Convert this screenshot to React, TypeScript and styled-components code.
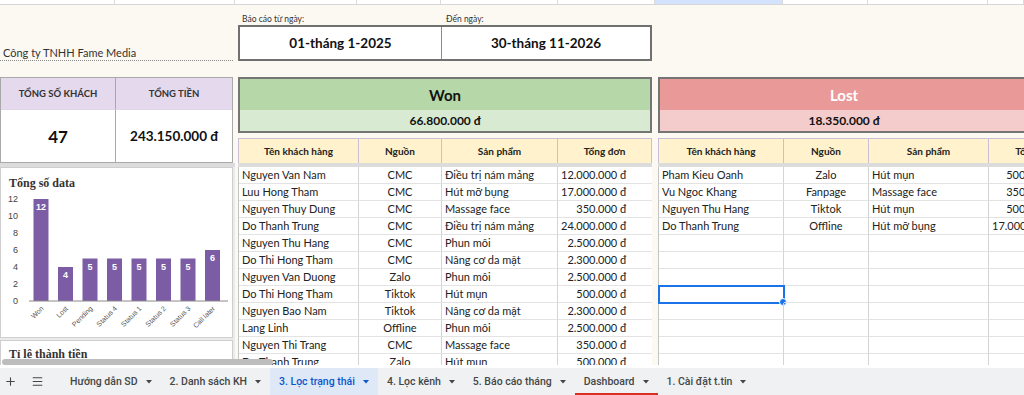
import React from "react";
import styled, { createGlobalStyle } from "styled-components";
import { Plus, Menu } from "lucide-react";

const GlobalStyle = createGlobalStyle`
  html, body {
    margin: 0;
    padding: 0;
  }
  body {
    width: 1024px;
    height: 395px;
    overflow: hidden;
    background: #fcf9f2;
    font-family: Lato, "Noto Sans", sans-serif;
    color: #222;
  }
`;

const palette = {
  cream: "#fcf9f2",
  lavender: "#e5d9ed",
  wonTop: "#b6d7a8",
  wonBottom: "#d9ead3",
  lostTop: "#ea9999",
  lostBottom: "#f4cccc",
  headYellow: "#fff2cc",
  frozen: "#dcdcdc",
  bar: "#7c5ca5",
};

interface Row {
  name: string;
  source: string;
  product: string;
  total: string;
}

const wonRows: Row[] = [
  { name: "Nguyen Van Nam", source: "CMC", product: "Điều trị nám mảng", total: "12.000.000 đ" },
  { name: "Luu Hong Tham", source: "CMC", product: "Hút mỡ bụng", total: "17.000.000 đ" },
  { name: "Nguyen Thuy Dung", source: "CMC", product: "Massage face", total: "350.000 đ" },
  { name: "Do Thanh Trung", source: "CMC", product: "Điều trị nám mảng", total: "24.000.000 đ" },
  { name: "Nguyen Thu Hang", source: "CMC", product: "Phun môi", total: "2.500.000 đ" },
  { name: "Do Thi Hong Tham", source: "CMC", product: "Nâng cơ da mặt", total: "2.300.000 đ" },
  { name: "Nguyen Van Duong", source: "Zalo", product: "Phun môi", total: "2.500.000 đ" },
  { name: "Do Thi Hong Tham", source: "Tiktok", product: "Hút mụn", total: "500.000 đ" },
  { name: "Nguyen Bao Nam", source: "Tiktok", product: "Nâng cơ da mặt", total: "2.300.000 đ" },
  { name: "Lang Linh", source: "Offline", product: "Phun môi", total: "2.500.000 đ" },
  { name: "Nguyen Thi Trang", source: "CMC", product: "Massage face", total: "350.000 đ" },
  { name: "Do Thanh Trung", source: "Zalo", product: "Hút mụn", total: "500.000 đ" },
];

const lostRows: Row[] = [
  { name: "Pham Kieu Oanh", source: "Zalo", product: "Hút mụn", total: "500.000 đ" },
  { name: "Vu Ngoc Khang", source: "Fanpage", product: "Massage face", total: "350.000 đ" },
  { name: "Nguyen Thu Hang", source: "Tiktok", product: "Hút mụn", total: "500.000 đ" },
  { name: "Do Thanh Trung", source: "Offline", product: "Hút mỡ bụng", total: "17.000.000 đ" },
  ...Array.from({ length: 8 }, () => ({ name: "", source: "", product: "", total: "" })),
];

const chartData = [
  { label: "Won", value: 12 },
  { label: "Lost", value: 4 },
  { label: "Pending", value: 5 },
  { label: "Status 4", value: 5 },
  { label: "Status 1", value: 5 },
  { label: "Status 2", value: 5 },
  { label: "Status 3", value: 5 },
  { label: "Call later", value: 6 },
];

const topCells = [115, 120, 122, 84, 117, 97, 128, 85, 120, 36];

const tabs = [
  { label: "Hướng dẫn SD" },
  { label: "2. Danh sách KH" },
  { label: "3. Lọc trạng thái", active: true },
  { label: "4. Lọc kênh" },
  { label: "5. Báo cáo tháng" },
  { label: "Dashboard", current: true },
  { label: "1. Cài đặt t.tin" },
];

/* ---------- layout ---------- */

const Page = styled.div`
  width: 1024px;
  height: 395px;
  display: flex;
  flex-direction: column;
  overflow: hidden;
`;

const TopStrip = styled.div`
  display: flex;
  height: 4px;
  background: #fff;
  border-bottom: 1px solid #d6d6d6;
  flex-shrink: 0;
`;

const TopCell = styled.div<{ $w: number; $selected?: boolean }>`
  width: ${(p) => p.$w}px;
  flex-shrink: 0;
  box-sizing: border-box;
  border-right: 1px solid #dadada;
  background: ${(p) => (p.$selected ? "#d3e3fd" : "#fff")};
`;

const Main = styled.div`
  position: relative;
  height: 360px;
  display: flex;
  overflow: hidden;
  flex-shrink: 0;
`;

const Column = styled.div<{ $width: number; $offset?: number }>`
  width: ${(p) => p.$width}px;
  margin-left: ${(p) => p.$offset || 0}px;
  flex-shrink: 0;
  display: flex;
  flex-direction: column;
  overflow: hidden;
  & > * {
    flex-shrink: 0;
  }
`;

/* ---------- left column ---------- */

const CompanyArea = styled.div`
  height: 72px;
  padding-top: 40px;
  box-sizing: border-box;
`;

const CompanyName = styled.div`
  font-size: 11px;
  line-height: 15px;
  padding-left: 3px;
  margin-right: 2px;
  color: #333;
  border-bottom: 1px dotted #8a8a8a;
`;

const StatsPanel = styled.div`
  height: 86px;
  width: 233px;
  box-sizing: border-box;
  border: 1px solid #a9a9a9;
  display: grid;
  grid-template-columns: 114px 1fr;
  grid-template-rows: 32px 1fr;
  background: #fff;
`;

const StatLabel = styled.div`
  background: ${palette.lavender};
  display: flex;
  align-items: center;
  justify-content: center;
  font-size: 9.5px;
  font-weight: 700;
  color: #333;
  border-bottom: 1px solid #e0d4e8;
  & + & {
    border-left: 1px solid #a9a9a9;
  }
`;

const StatValue = styled.div<{ $size: number; $divider?: boolean }>`
  display: flex;
  align-items: center;
  justify-content: center;
  font-size: ${(p) => p.$size}px;
  font-weight: 700;
  color: #111;
  border-left: ${(p) => (p.$divider ? "1px solid #a9a9a9" : "none")};
`;

const FrozenBar = styled.div`
  height: 4px;
  background: ${palette.frozen};
  flex-shrink: 0;
`;

const ChartStack = styled.div`
  flex: 1;
  background: #ebebeb;
  padding-right: 2px;
  display: flex;
  flex-direction: column;
  gap: 2px;
`;

const ChartCard = styled.div<{ $height?: number }>`
  height: ${(p) => (p.$height ? `${p.$height}px` : "auto")};
  flex: ${(p) => (p.$height ? "none" : "1")};
  background: #fff;
  border: 1px solid #cfcfcf;
  box-sizing: border-box;
`;

const ChartTitle = styled.div<{ $pad: number }>`
  font-family: "Liberation Serif", "DejaVu Serif", serif;
  font-weight: 700;
  font-size: 12px;
  color: #333;
  height: 24px;
  box-sizing: border-box;
  padding: ${(p) => p.$pad}px 0 0 ${(p) => (p.$pad > 5 ? 8 : 3)}px;
`;

const ChartSvg = styled.svg`
  display: block;
`;

/* ---------- date + status blocks ---------- */

const DateArea = styled.div`
  height: 72px;
  padding-top: 9px;
  box-sizing: border-box;
`;

const DateLabels = styled.div`
  display: grid;
  grid-template-columns: 203px 1fr;
  font-size: 8.5px;
  line-height: 11px;
  color: #333;
  padding-left: 4px;
  & > span + span {
    padding-left: 1px;
  }
`;

const DateBox = styled.div`
  height: 36px;
  box-sizing: border-box;
  border: 2px solid #707070;
  background: #fff;
  display: grid;
  grid-template-columns: 201px 1fr;
`;

const DateValue = styled.div`
  display: flex;
  align-items: center;
  justify-content: center;
  font-size: 13.5px;
  font-weight: 700;
  color: #111;
  & + & {
    border-left: 1px solid #8a8a8a;
  }
`;

const EmptyArea = styled.div`
  height: 72px;
`;

const StatusBlock = styled.div`
  height: 56px;
  box-sizing: border-box;
  border: 2px solid #757575;
  display: grid;
  grid-template-rows: 31px 1fr;
`;

const StatusTitle = styled.div<{ $bg: string; $light?: boolean }>`
  background: ${(p) => p.$bg};
  color: ${(p) => (p.$light ? "#fff" : "#111")};
  display: flex;
  align-items: center;
  justify-content: center;
  font-size: 15px;
  font-weight: 700;
`;

const StatusAmount = styled.div<{ $bg: string }>`
  background: ${(p) => p.$bg};
  display: flex;
  align-items: center;
  justify-content: center;
  font-size: 12px;
  font-weight: 700;
  color: #111;
`;

/* ---------- tables ---------- */

const TableGrid = styled.div<{ $cols: string }>`
  display: grid;
  grid-template-columns: ${(p) => p.$cols};
`;

const HeadRow = styled(TableGrid)`
  margin-top: 5px;
  height: 25px;
  background: ${palette.headYellow};
  border-top: 1px solid #cbbfd4;
  border-left: 1px solid #cbbfd4;
  box-sizing: border-box;
`;

const HeadCell = styled.div`
  display: flex;
  align-items: center;
  justify-content: center;
  font-size: 10px;
  font-weight: 700;
  color: #222;
  border-right: 1px solid #cbbfd4;
  white-space: nowrap;
`;

const Body = styled(TableGrid)`
  background: #fff;
  border-left: 1px solid #c4c4c4;
  grid-auto-rows: 17px;
`;

const Cell = styled.div<{ $align?: "left" | "center" | "right"; $selected?: boolean }>`
  position: relative;
  box-sizing: border-box;
  font-size: 11px;
  line-height: 16px;
  color: #222;
  white-space: nowrap;
  overflow: visible;
  text-align: ${(p) => p.$align || "left"};
  padding: ${(p) => (p.$align === "right" ? "0 27px 0 3px" : "0 3px")};
  border-right: 1px solid #d4d4d4;
  border-bottom: 1px solid #e3e3e3;
  outline: ${(p) => (p.$selected ? "2px solid #1a73e8" : "none")};
  outline-offset: -1px;
  &::after {
    content: "";
    display: ${(p) => (p.$selected ? "block" : "none")};
    position: absolute;
    right: -4px;
    bottom: -4px;
    width: 6px;
    height: 6px;
    border-radius: 50%;
    background: #1a73e8;
    border: 1px solid #fff;
  }
`;

const ScrollThumb = styled.div`
  position: absolute;
  z-index: 2;
  left: 2px;
  bottom: 0;
  width: 271px;
  height: 6px;
  border-radius: 3px;
  background: #bdbdbd;
`;

const ScrollGap = styled.div`
  height: 3px;
  background: #fff;
  flex-shrink: 0;
`;

/* ---------- sheet tabs ---------- */

const TabBar = styled.div`
  height: 27px;
  background: #eff1f3;
  display: flex;
  align-items: stretch;
  font-family: Roboto, "Noto Sans", sans-serif;
  flex-shrink: 0;
`;

const IconButton = styled.div<{ $offset?: number }>`
  width: 20px;
  margin-left: ${(p) => p.$offset || 0}px;
  display: flex;
  align-items: center;
  justify-content: center;
  color: #444746;
`;

const Tabs = styled.div`
  display: flex;
  margin-left: 14px;
`;

const Tab = styled.div<{ $active?: boolean; $current?: boolean }>`
  display: flex;
  align-items: center;
  gap: 8px;
  padding: 0 9px;
  font-size: 10.5px;
  font-weight: 500;
  white-space: nowrap;
  color: ${(p) => (p.$active ? "#0b57d0" : "#444746")};
  background: ${(p) => (p.$active ? "#dfe8f6" : "transparent")};
  box-shadow: ${(p) => (p.$current ? "inset 0 -2px 0 #d93025" : "none")};
`;

const Caret: React.FC = () => (
  <svg width="6" height="4" viewBox="0 0 6 4">
    <path d="M0 0 L6 0 L3 3.5 Z" fill="currentColor" />
  </svg>
);

/* ---------- pieces ---------- */

const DataChart: React.FC = () => {
  const axisY = 109;
  const unit = 8.5;
  const centers = [40, 64.5, 89, 113.5, 138, 162.5, 187, 211.5];
  return (
    <ChartSvg width="230" height="146" viewBox="0 0 230 146">
      {[0, 2, 4, 6, 8, 10, 12].map((v) => (
        <text
          key={v}
          x={17}
          y={axisY - v * unit + 3}
          textAnchor="end"
          fontSize="9"
          fontFamily="Liberation Sans, Arial, sans-serif"
          fill="#444"
        >
          {v}
        </text>
      ))}
      {chartData.map((d, i) => {
        const h = d.value * unit;
        const cx = centers[i];
        return (
          <g key={d.label}>
            <rect x={cx - 7.5} y={axisY - h} width={15} height={h} fill={palette.bar} />
            <text
              x={cx}
              y={axisY - h + 11}
              textAnchor="middle"
              fontSize="9"
              fontWeight="700"
              fontFamily="Liberation Sans, Arial, sans-serif"
              fill="#fff"
            >
              {d.value}
            </text>
            <text
              x={cx + 3}
              y={axisY + 8}
              textAnchor="end"
              fontSize="7"
              fontFamily="Liberation Sans, Arial, sans-serif"
              fill="#555"
              transform={`rotate(-45 ${cx + 3} ${axisY + 8})`}
            >
              {d.label}
            </text>
          </g>
        );
      })}
      <line x1={28} x2={227} y1={axisY} y2={axisY} stroke="#8a8a8a" strokeWidth="1" />
    </ChartSvg>
  );
};

const ResultTable: React.FC<{ cols: string; rows: Row[]; selected?: number }> = ({
  cols,
  rows,
  selected,
}) => (
  <>
    <HeadRow $cols={cols}>
      <HeadCell>Tên khách hàng</HeadCell>
      <HeadCell>Nguồn</HeadCell>
      <HeadCell>Sản phẩm</HeadCell>
      <HeadCell>Tổng đơn</HeadCell>
    </HeadRow>
    <FrozenBar />
    <Body $cols={cols}>
      {rows.map((r, i) => (
        <React.Fragment key={i}>
          <Cell $selected={selected === i}>{r.name}</Cell>
          <Cell $align="center">{r.source}</Cell>
          <Cell>{r.product}</Cell>
          <Cell $align="right">{r.total}</Cell>
        </React.Fragment>
      ))}
    </Body>
  </>
);

export default function App() {
  return (
    <>
      <GlobalStyle />
      <Page>
        <TopStrip>
          {topCells.map((w, i) => (
            <TopCell key={i} $w={w} $selected={i === 6} />
          ))}
        </TopStrip>

        <Main>
          <Column $width={235}>
            <CompanyArea>
              <CompanyName>Công ty TNHH Fame Media</CompanyName>
            </CompanyArea>
            <StatsPanel>
              <StatLabel>TỔNG SỐ KHÁCH</StatLabel>
              <StatLabel>TỔNG TIỀN</StatLabel>
              <StatValue $size={17}>47</StatValue>
              <StatValue $size={13.5} $divider>
                243.150.000 đ
              </StatValue>
            </StatsPanel>
            <FrozenBar />
            <ChartStack>
              <ChartCard $height={171}>
                <ChartTitle $pad={8}>Tổng số data</ChartTitle>
                <DataChart />
              </ChartCard>
              <ChartCard>
                <ChartTitle $pad={6}>Tỉ lệ thành tiền</ChartTitle>
              </ChartCard>
            </ChartStack>
          </Column>

          <Column $width={414} $offset={3}>
            <DateArea>
              <DateLabels>
                <span>Báo cáo từ ngày:</span>
                <span>Đến ngày:</span>
              </DateLabels>
              <DateBox>
                <DateValue>01-tháng 1-2025</DateValue>
                <DateValue>30-tháng 11-2026</DateValue>
              </DateBox>
            </DateArea>
            <StatusBlock>
              <StatusTitle $bg={palette.wonTop}>Won</StatusTitle>
              <StatusAmount $bg={palette.wonBottom}>66.800.000 đ</StatusAmount>
            </StatusBlock>
            <ResultTable cols="120px 83px 116px 1fr" rows={wonRows} />
          </Column>

          <Column $width={372} $offset={6}>
            <EmptyArea />
            <StatusBlock>
              <StatusTitle $bg={palette.lostTop} $light>
                Lost
              </StatusTitle>
              <StatusAmount $bg={palette.lostBottom}>18.350.000 đ</StatusAmount>
            </StatusBlock>
            <ResultTable cols="125px 85px 120px 95px" rows={lostRows} selected={7} />
          </Column>

          <ScrollThumb />
        </Main>
        <ScrollGap />

        <TabBar>
          <IconButton>
            <Plus size={13} strokeWidth={2} />
          </IconButton>
          <IconButton $offset={7}>
            <Menu size={13} strokeWidth={2} />
          </IconButton>
          <Tabs>
            {tabs.map((t) => (
              <Tab key={t.label} $active={t.active} $current={t.current}>
                {t.label}
                <Caret />
              </Tab>
            ))}
          </Tabs>
        </TabBar>
      </Page>
    </>
  );
}
